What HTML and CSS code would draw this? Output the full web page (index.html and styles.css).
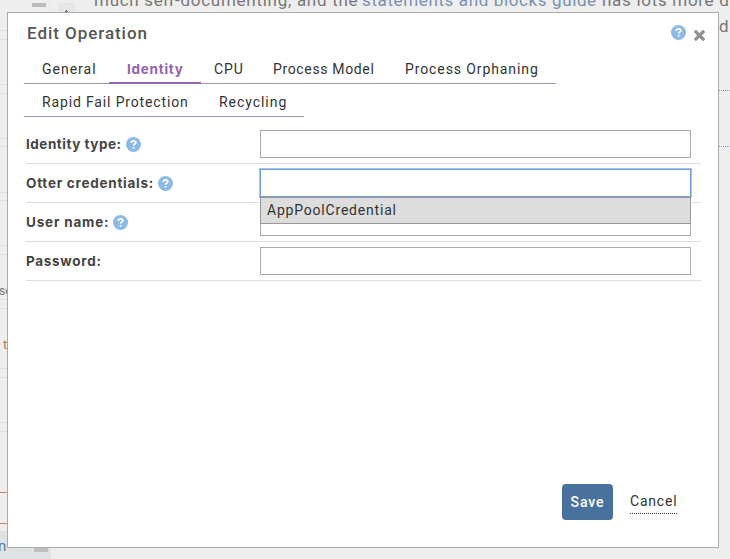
FILE: index.html
```html
<!DOCTYPE html>
<html lang="en">
<head>
<meta charset="utf-8">
<title>Edit Operation</title>
<link rel="stylesheet" href="styles.css">
</head>
<body>
<svg class="symbols" aria-hidden="true">
  <symbol id="help" viewBox="0 0 15 15"><circle cx="7.5" cy="7.5" r="7.5" fill="#8bbae6"/><path d="M5.3 6C5.3 4.5 6.2 3.8 7.5 3.8S9.8 4.5 9.8 5.7C9.8 7 7.6 7.1 7.6 8.7M7.6 10.1v1.6" fill="none" stroke="#fff" stroke-width="1.7"/></symbol>
</svg>
<div class="backdrop" aria-hidden="true">
  <svg class="page-lines" width="730" height="559" shape-rendering="crispEdges">
    <path d="M32 3h14v4H32z" fill="#bdbdbd"/>
    <path d="M49 3h1v9h-1zM58 3h17v9H58z" fill="#e6e6e6"/>
    <path d="M66 10h1v1h1v1h-3v-1h1z" fill="#666"/>
    <path d="M0 30.5h7M0 39.5h7M0 84.5h7M0 93.5h7M0 138.5h7M0 146.5h7M0 192.5h7M0 200.5h7M0 245.5h7M0 254.5h7M0 299.5h7M0 308.5h7M0 368.5h7M0 377.5h7M0 422.5h7M0 431.5h7" stroke="#dfe1e1"/>
    <path d="M0 492.5h7M0 523.5h7" stroke="#d88070"/>
    <path d="M0 531h51v28H0z" fill="#dfe3e3"/>
    <path d="M34 548h14v4H34z" fill="#bdbfbf"/>
    <path d="M719 90.5h11" stroke="#a08ba5" stroke-dasharray="1 1"/>
    <path d="M719 146.5h11" stroke="#9993dd" stroke-dasharray="1 1"/>
  </svg>
  <p class="intro"><span class="part-a">much self-documenting, and the</span> <span class="part-b">statements and blocks guide</span> <span class="part-c">has lots more de</span></p>
  <span class="frag frag-d">d</span>
  <span class="frag frag-se">se</span>
  <span class="frag frag-t">t</span>
  <span class="frag frag-n">n</span>
</div>
<main class="dialog">
  <header class="titlebar">
    <h1>Edit Operation</h1>
    <svg class="help"><use href="#help"/></svg>
    <svg class="close" viewBox="0 0 11 11"><path d="M2 2l7 7M9 2L2 9" stroke="#909090" stroke-width="3.3" stroke-linecap="square"/></svg>
  </header>
  <nav class="tabs">
    <div class="tab-row">
      <a class="tab general">General</a><a class="tab identity">Identity</a><a class="tab cpu">CPU</a><a class="tab model">Process Model</a><a class="tab orphaning">Process Orphaning</a>
    </div>
    <div class="tab-row">
      <a class="tab rapid">Rapid Fail Protection</a><a class="tab recycling">Recycling</a>
    </div>
  </nav>
  <form class="fields">
    <div class="field"><label class="type">Identity type:</label><svg class="help"><use href="#help"/></svg><input type="text"></div>
    <div class="field"><label class="otter">Otter credentials:</label><svg class="help"><use href="#help"/></svg><div class="combo"><input class="focused" type="text"><div class="menu"><span>AppPoolCredential</span></div></div></div>
    <div class="field"><label class="user">User name:</label><svg class="help"><use href="#help"/></svg><input type="text"></div>
    <div class="field"><label class="password">Password:</label><input type="text"></div>
  </form>
  <footer class="actions"><button type="button">Save</button><a class="cancel">Cancel</a></footer>
</main>
</body>
</html>
```
FILE: styles.css
```css
* { box-sizing: border-box; }
body { margin: 0; width: 730px; height: 559px; overflow: hidden; background: #eee; color: #333; font-family: Roboto, "Liberation Sans", sans-serif; font-size: 14px; }
.symbols { position: absolute; width: 0; height: 0; }
.backdrop { position: absolute; inset: 0; overflow: hidden; }
.page-lines { display: block; }
.intro { position: absolute; left: 94px; top: -10px; margin: 0; display: flex; white-space: nowrap; font-size: 17px; line-height: 20px; color: #777; }
.part-a { width: 268px; letter-spacing: .72px; }
.part-b { width: 240px; letter-spacing: .62px; color: #7890b5; }
.part-c { letter-spacing: .7px; }
.frag { position: absolute; line-height: 20px; color: #777; }
.frag-d { left: 719px; top: 16px; font-size: 17px; }
.frag-se { left: -1px; top: 281px; font-size: 12px; }
.frag-t { left: 3px; top: 335px; font-size: 13px; color: #b08050; }
.frag-n { left: -2px; top: 536px; font-size: 15px; color: #5a78a5; }
.dialog { position: relative; margin: 12px 0 0 7px; width: 712px; height: 536px; background: #fff; border: 1px solid #aaa; display: flex; flex-direction: column; }
.titlebar { display: flex; height: 44px; padding: 0 12px 0 19px; }
h1 { flex: 1; margin: 9px 0 0; font-size: 17px; line-height: 22px; font-weight: 500; letter-spacing: .95px; color: #555; }
.help { width: 15px; height: 15px; flex: none; }
.titlebar .help { margin: 12px 8px 0 0; }
.close { width: 11px; height: 11px; margin: 17px 1px 0 0; }
.tabs { margin-left: 16px; }
.tab-row { display: flex; width: max-content; }
.tab { height: 27px; line-height: 25px; border-bottom: 1px solid #939ab5; white-space: nowrap; letter-spacing: .85px; }
.tab-row + .tab-row .tab { height: 33px; line-height: 37px; }
.general { width: 85px; padding-left: 18px; letter-spacing: 1px; }
.identity { width: 92px; padding-left: 18px; border-bottom: 2px solid #9163b0; color: #9163b0; font-family: Inter, sans-serif; font-size: 13.5px; font-weight: 700; letter-spacing: .75px; }
.cpu { width: 57px; padding-left: 13px; }
.model { width: 132px; padding-left: 15px; letter-spacing: .65px; }
.orphaning { width: 166px; padding-left: 15px; letter-spacing: .9px; }
.rapid { width: 180px; padding-left: 18px; }
.recycling { width: 100px; padding-left: 15px; letter-spacing: .95px; }
.fields { margin: 8px 17px 0 18px; }
.field { display: flex; align-items: center; height: 39px; border-bottom: 1px solid #ddd; }
.field label { margin-right: 4px; font-family: Inter, sans-serif; font-size: 13.5px; font-weight: 700; color: #444; white-space: nowrap; }
.type { letter-spacing: .52px; }
.otter { letter-spacing: .74px; }
.user { letter-spacing: .8px; }
.password { padding-bottom: 1px; letter-spacing: .7px; }
.field input { margin-left: auto; }
input { display: block; width: 431px; height: 28px; margin-right: 10px; border: 1px solid #aaa; border-radius: 0; background: #fff; outline: 0; }
.combo { position: relative; margin-left: auto; }
.focused { border-color: #7199d5; box-shadow: 0 0 0 1px #a4c5f5; }
.menu { position: absolute; z-index: 1; left: 0; top: 28px; width: 431px; height: 27px; padding-left: 6px; line-height: 25px; border: 1px solid #999; background: #ddd; letter-spacing: .8px; }
.actions { display: flex; align-items: center; margin: auto 41px 27px auto; }
button { width: 51px; height: 36px; padding: 0; border: 0; border-radius: 4px; background: #48719e; color: #fff; font: 500 14px Roboto, sans-serif; letter-spacing: .9px; }
.cancel { margin-left: 17px; width: 47px; height: 24px; line-height: 23px; border-bottom: 1px dotted #333; letter-spacing: .8px; }
```
